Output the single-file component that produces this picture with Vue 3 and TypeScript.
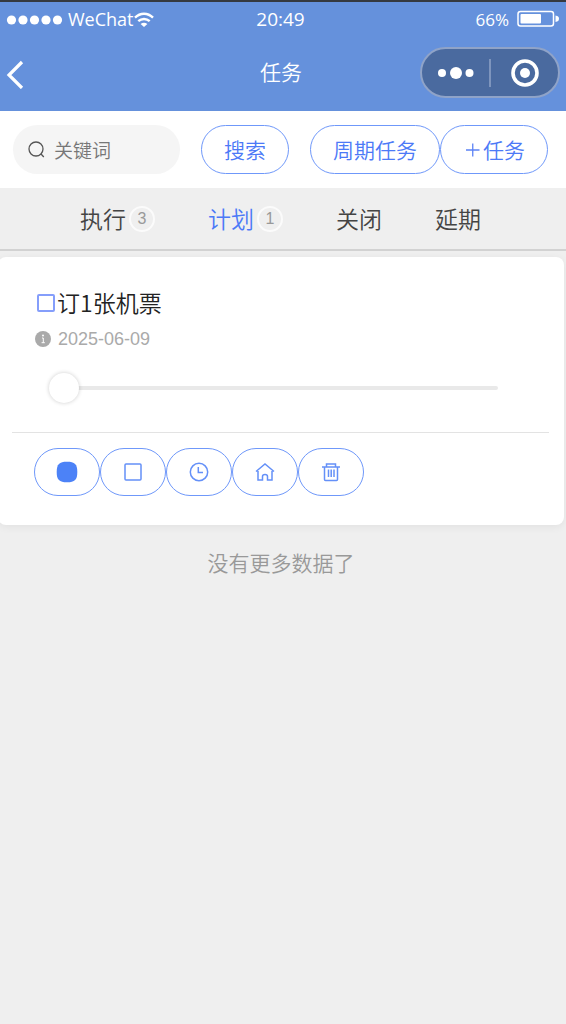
<script setup lang="ts">
import { ref } from 'vue'

interface Tab {
  name: string
  count?: number
}

const tabs: Tab[] = [
  { name: '执行', count: 3 },
  { name: '计划', count: 1 },
  { name: '关闭' },
  { name: '延期' },
]

const active = ref('计划')
const keyword = ref('')
const done = ref(false)
const progress = ref(0)
</script>

<template>
  <div class="page">
    <header class="header">
      <div class="status">
        <div class="carrier">
          <svg width="64" height="12" viewBox="0 0 64 12" fill="#fff" aria-hidden="true">
            <circle cx="9.5" cy="7" r="4.6" />
            <circle cx="21" cy="7" r="4.6" />
            <circle cx="32.5" cy="7" r="4.6" />
            <circle cx="44" cy="7" r="4.6" />
            <circle cx="55.5" cy="7" r="4.6" />
          </svg>
          <span class="carrier-name">WeChat</span>
          <svg width="20" height="16" viewBox="0 0 20 16" fill="none" stroke="#fff" stroke-width="2.4" aria-hidden="true">
            <path d="M1 6.6C6.2 1.4 13.8 1.4 19 6.600" />
            <path d="M4.3 10.2C7.6 7.2 12.4 7.2 15.7 10.2" />
            <path d="M6.600 13C8.800 11.200 11.200 11.200 13.400 13L10 16Z" fill="#fff" stroke="none" />
          </svg>
        </div>
        <time class="clock">20:49</time>
        <div class="battery">
          <span>66%</span>
          <svg width="42" height="18" viewBox="0 0 42 18" aria-hidden="true">
            <rect x="1" y="1.5" width="35.5" height="14.5" rx="2.5" fill="none" stroke="#fff" stroke-width="1.5" />
            <rect x="3.5" y="4" width="20.5" height="9.5" rx="1" fill="#fff" />
            <path d="M38.5 5.5Q42 6 42 8.75T38.5 12Z" fill="#fff" />
          </svg>
        </div>
      </div>
      <div class="nav">
        <button class="back" type="button" aria-label="返回">
          <svg width="24" height="32" viewBox="0 0 24 32" fill="none" stroke="#fff" stroke-width="3.2">
            <path d="M20 5L7 18L20 31" />
          </svg>
        </button>
        <h1 class="title">任务</h1>
        <div class="capsule">
          <button class="capsule-button" type="button" aria-label="更多">
            <svg width="38" height="14" viewBox="0 0 38 14" fill="#fff">
              <circle cx="5" cy="7" r="4" />
              <circle cx="19" cy="7" r="6" />
              <circle cx="32.5" cy="7" r="4" />
            </svg>
          </button>
          <span class="capsule-line"></span>
          <button class="capsule-button" type="button" aria-label="关闭小程序">
            <svg width="28" height="28" viewBox="0 0 28 28">
              <circle cx="14" cy="14" r="12" fill="none" stroke="#fff" stroke-width="3.6" />
              <circle cx="14" cy="14" r="5" fill="#fff" />
            </svg>
          </button>
        </div>
      </div>
    </header>

    <form class="search" @submit.prevent>
      <label class="field">
        <svg width="18" height="18" viewBox="0 0 18 18" fill="none" stroke="#555" stroke-width="1.3" aria-hidden="true">
          <circle cx="8" cy="8" r="7" />
          <path d="M12.8 12.8L15.8 16" />
        </svg>
        <input v-model="keyword" type="text" placeholder="关键词" aria-label="关键词" />
      </label>
      <button class="pill" type="submit">搜索</button>
      <div class="pair">
        <button class="pill" type="button">周期任务</button>
        <button class="pill" type="button">
          <svg width="20" height="20" viewBox="0 0 20 20" fill="none" stroke="#5c83f5" stroke-width="1.3" aria-hidden="true">
            <path d="M3 11H16.5M9.75 4.5V17.5" />
          </svg>任务
        </button>
      </div>
    </form>

    <nav class="tabs">
      <button
        v-for="tab in tabs"
        :key="tab.name"
        class="tab"
        :class="{ active: tab.name === active }"
        type="button"
        @click="active = tab.name"
      >
        <span class="tab-name">{{ tab.name }}</span>
        <span v-if="tab.count" class="badge">{{ tab.count }}</span>
      </button>
    </nav>

    <main>
      <article class="card">
        <div class="body">
          <label class="task">
            <input v-model="done" class="check" type="checkbox" />
            <span class="task-name">订1张机票</span>
          </label>
          <div class="date">
            <svg width="16" height="16" viewBox="0 0 16 16" aria-hidden="true">
              <circle cx="8" cy="8" r="8" fill="#aaa" />
              <circle cx="8" cy="4.5" r="1" fill="#fff" />
              <path d="M7 7H8.3V11.5M6.600 11.7H9.800" fill="none" stroke="#fff" stroke-width="1" />
            </svg>
            <time datetime="2025-06-09">2025-06-09</time>
          </div>
          <input v-model.number="progress" class="slider" type="range" min="0" max="100" aria-label="进度" />
        </div>
        <div class="actions">
          <button class="action" type="button" aria-label="停止">
            <svg width="22" height="22" viewBox="0 0 22 22">
              <path d="M11 .7C18.8 .7 21.3 3.2 21.3 11S18.8 21.3 11 21.3S.7 18.8 .7 11S3.2 .7 11 .7Z" fill="#4c82f7" />
            </svg>
          </button>
          <button class="action" type="button" aria-label="完成">
            <svg width="22" height="22" viewBox="0 0 22 22">
              <rect x="3" y="3" width="16" height="16" rx="1" />
            </svg>
          </button>
          <button class="action" type="button" aria-label="定时">
            <svg width="22" height="22" viewBox="0 0 22 22">
              <circle cx="11" cy="11" r="8.7" />
              <path d="M10.3 6V11.5H15" />
            </svg>
          </button>
          <button class="action" type="button" aria-label="主页">
            <svg width="22" height="22" viewBox="0 0 22 22">
              <path d="M2 10.5L11 3L20 10.5M4 10V19H8.500V15.500Q8.500 13.500 11 13.500T13.500 15.500V19H18V10" />
            </svg>
          </button>
          <button class="action" type="button" aria-label="删除">
            <svg width="22" height="22" viewBox="0 0 22 22">
              <path d="M2 6H20M6.5 6V3H15.5V6M4.5 6V18.5Q4.5 19.5 5.5 19.5H16.5Q17.5 19.5 17.5 18.5V6M8.500 8.5V16M11.200 8.5V16M14 8.5V16" />
            </svg>
          </button>
        </div>
      </article>
      <p class="end">没有更多数据了</p>
    </main>
  </div>
</template>

<style>
body {
  background: #efefef;
}
</style>

<style scoped>
.page {
  min-height: 100vh;
  overflow: hidden;
  background: #efefef;
  color: #444;
  font-family: "Noto Sans CJK SC", sans-serif;
  font-weight: 350;
}

.page * {
  box-sizing: border-box;
}

button,
input {
  margin: 0;
  padding: 0;
  border: 0;
  background: none;
  color: inherit;
  font: inherit;
}

svg {
  flex: none;
  display: block;
}

.header {
  border-top: 2px solid #353940;
  background: #6591dc;
  color: #fff;
}

.status,
.nav {
  display: grid;
  grid-template-columns: 1fr auto 1fr;
  align-items: center;
}

.status {
  height: 34px;
  padding: 0 7px 0 2px;
  font-family: "Open Sans", sans-serif;
  font-weight: 400;
}

.carrier,
.battery {
  display: flex;
  align-items: center;
}

.carrier {
  font-size: 18px;
}

.carrier-name {
  margin-left: 2px;
}

.clock {
  font-size: 19px;
}

.battery {
  justify-content: flex-end;
  gap: 8px;
  font-size: 17px;
}

.nav {
  height: 75px;
  padding: 0 6px 2px 2px;
}

.back {
  justify-self: start;
}

.title {
  margin: 0;
  padding-bottom: 4px;
  font-size: 21px;
  font-weight: inherit;
  line-height: 30px;
}

.capsule {
  display: flex;
  justify-self: end;
  align-items: center;
  width: 140px;
  height: 51px;
  border: 2px solid #8fa3c8;
  border-radius: 26px;
  background: #4a6a9f;
}

.capsule-button {
  display: flex;
  flex: 1;
  justify-content: center;
}

.capsule-line {
  width: 2px;
  height: 28px;
  background: #7e95bd;
}

.search {
  display: flex;
  gap: 21px;
  padding: 14px 18px 14px 13px;
  background: #fff;
}

.field {
  display: flex;
  flex: 1;
  align-items: center;
  gap: 8px;
  min-width: 0;
  height: 49px;
  padding: 0 14px 0 15px;
  border-radius: 25px;
  background: #f5f5f5;
}

.field input {
  width: 100%;
  min-width: 0;
  font-size: 19px;
}

.field input::placeholder {
  color: #777;
  opacity: 1;
}

.pair {
  display: flex;
}

.pill {
  display: flex;
  align-items: center;
  height: 49px;
  padding: 0 22px 2px;
  border: 1px solid #6f98fa;
  border-radius: 25px;
  color: #4c79f7;
  font-size: 21px;
  white-space: nowrap;
}

.tabs {
  display: flex;
  justify-content: center;
  gap: 53px;
  height: 63px;
  padding-right: 5px;
  border-bottom: 2px solid #d2d2d2;
}

.tab {
  display: flex;
  align-items: center;
  gap: 3px;
  font-size: 23px;
}

.tab-name,
.task-name {
  padding-bottom: 2px;
}

.tab.active {
  color: #4c79f7;
}

.badge {
  width: 26px;
  height: 26px;
  border: 2px solid #fbfbfb;
  border-radius: 50%;
  color: #999;
  font-family: "Liberation Sans", sans-serif;
  font-size: 16px;
  font-weight: 400;
  line-height: 22px;
  text-align: center;
}

.card {
  margin: 6px 2px 0 -2px;
  padding: 28px 15px 29px 14px;
  border-radius: 8px;
  background: #fff;
  box-shadow: 0 2px 8px rgba(0, 0, 0, 0.06);
}

.body {
  padding: 0 51px 29px 23px;
  border-bottom: 1px solid #e3e3e3;
}

.task {
  display: flex;
  align-items: center;
  gap: 2px;
  height: 36px;
  color: #222;
  font-size: 23px;
}

.check {
  flex: none;
  width: 18px;
  height: 18px;
  margin-left: 2px;
  border: 2px solid #859efb;
  border-radius: 2px;
  appearance: none;
}

.check:checked {
  background: #4c82f7;
}

.date {
  display: flex;
  align-items: center;
  gap: 7px;
  height: 36px;
  color: #aaa;
  font-family: "Liberation Sans", sans-serif;
  font-size: 18px;
  font-weight: 400;
}

.slider {
  display: block;
  width: calc(100% - 14px);
  height: 30px;
  margin: 16px 0 0 14px;
  appearance: none;
}

.slider::-webkit-slider-runnable-track {
  height: 4px;
  border-radius: 2px;
  background: #e9e9e9;
}

.slider::-webkit-slider-thumb {
  width: 30px;
  height: 30px;
  margin-top: -13px;
  border-radius: 50%;
  background: #fff;
  box-shadow: 0 0 4px rgba(0, 0, 0, 0.2);
  appearance: none;
}

.actions {
  display: flex;
  padding: 15px 0 0 22px;
}

.action {
  display: flex;
  align-items: center;
  justify-content: center;
  width: 66px;
  height: 48px;
  border: 1px solid #6f98fa;
  border-radius: 24px;
}

.action svg {
  fill: none;
  stroke: #6490f8;
  stroke-width: 1.5;
}

.action path[fill] {
  stroke: none;
}

.end {
  margin: 22px 0;
  padding-right: 4px;
  color: #999;
  font-size: 21px;
  line-height: 30px;
  text-align: center;
}
</style>
